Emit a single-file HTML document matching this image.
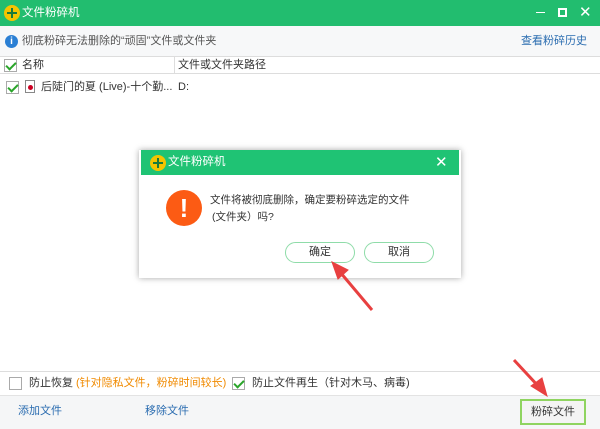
<!DOCTYPE html><html><head><meta charset="utf-8"><style>
*{margin:0;padding:0;box-sizing:border-box}
body{width:600px;height:429px;position:relative;overflow:hidden;background:#fff;font-family:"Liberation Sans","Noto Sans CJK SC",sans-serif;font-size:11px;line-height:12px;color:#333}
.a{position:absolute;white-space:nowrap}
.cb{position:absolute;width:13px;height:13px;border:1px solid #aaa;background:#fff}
.ck::after{content:"";position:absolute;left:3px;top:0px;width:4px;height:8px;border:solid #2aa52a;border-width:0 2px 2px 0;transform:rotate(45deg)}
.logo{position:absolute;width:16px;height:16px;border-radius:50%;background:#f5c400}
.logo::before{content:"";position:absolute;left:3px;top:7px;width:10px;height:2px;background:#1c7a3c}
.logo::after{content:"";position:absolute;left:7px;top:3px;width:2px;height:10px;background:#1c7a3c}
</style></head><body>
<div class="a" style="left:0;top:0;width:600px;height:26px;background:#22bd6f"></div>
<div class="logo" style="left:4px;top:5px"></div>
<div class="a" style="left:22px;top:7px;color:#fff;font-size:11.5px;line-height:13px">文件粉碎机</div>
<div class="a" style="left:536px;top:12px;width:9px;height:1px;background:#fff"></div>
<div class="a" style="left:558px;top:8px;width:9px;height:9px;border:2px solid #fff"></div>
<div class="a" style="left:579px;top:5px;color:#fff;font-size:15px;line-height:16px">✕</div>
<div class="a" style="left:0;top:26px;width:600px;height:31px;background:#f7f8f9;border-bottom:1px solid #ddd"></div>
<div class="a" style="left:5px;top:35px;width:13px;height:13px;border-radius:50%;background:#2a7fd4;color:#fff;font-size:10px;text-align:center;line-height:13px;font-weight:bold">i</div>
<div class="a" style="left:22px;top:35px;color:#555">彻底粉碎无法删除的“顽固”文件或文件夹</div>
<div class="a" style="left:521px;top:35px;color:#2a6cb0">查看粉碎历史</div>
<div class="a" style="left:0;top:57px;width:600px;height:17px;border-bottom:1px solid #ddd;background:#fff"></div>
<div class="a" style="left:174px;top:57px;width:1px;height:17px;background:#ddd"></div>
<div class="cb ck" style="left:4px;top:59px"></div>
<div class="a" style="left:22px;top:59px">名称</div>
<div class="a" style="left:178px;top:59px">文件或文件夹路径</div>
<div class="cb ck" style="left:6px;top:81px"></div>
<div class="a" style="left:25px;top:80px;width:10px;height:13px;border:1px solid #888;background:#fff"><div style="position:absolute;left:2px;top:4px;width:5px;height:5px;border-radius:50%;background:#c02"></div></div>
<div class="a" style="left:41px;top:81px">后陡门的夏 (Live)-十个勤...</div>
<div class="a" style="left:178px;top:81px">D:</div>
<div class="a" style="left:0;top:371px;width:600px;height:1px;background:#ddd"></div>
<div class="cb" style="left:9px;top:377px"></div>
<div class="a" style="left:29px;top:377px">防止恢复</div>
<div class="a" style="left:76px;top:377px;color:#f08a00">(针对隐私文件，粉碎时间较长)</div>
<div class="cb ck" style="left:232px;top:377px"></div>
<div class="a" style="left:252px;top:377px">防止文件再生（针对木马、病毒)</div>
<div class="a" style="left:0;top:395px;width:600px;height:34px;background:#f5f6f7;border-top:1px solid #e3e3e3"></div>
<div class="a" style="left:18px;top:405px;color:#2a6cb0">添加文件</div>
<div class="a" style="left:145px;top:405px;color:#2a6cb0">移除文件</div>
<div class="a" style="left:520px;top:399px;width:66px;height:26px;border:2px solid #8fd460;background:#f4f4f4;text-align:center;line-height:22px">粉碎文件</div>
<div class="a" style="left:139px;top:150px;width:322px;height:128px;background:#fff;box-shadow:0 0 6px rgba(0,0,0,.35)"></div>
<div class="a" style="left:141px;top:150px;width:318px;height:25px;background:#1fc374"></div>
<div class="logo" style="left:150px;top:155px"></div>
<div class="a" style="left:168px;top:156px;color:#fff;font-size:11.5px;line-height:13px">文件粉碎机</div>
<div class="a" style="left:435px;top:155px;color:#fff;font-size:15px;line-height:16px">✕</div>
<div class="a" style="left:166px;top:190px;width:36px;height:36px;border-radius:50%;background:#fc5b14;color:#fff;font-size:26px;font-weight:bold;text-align:center;line-height:36px">!</div>
<div class="a" style="left:210px;top:194px;font-size:10.5px">文件将被彻底删除，确定要粉碎选定的文件</div>
<div class="a" style="left:212px;top:211px;font-size:10.5px">(文件夹）吗?</div>
<div class="a" style="left:285px;top:242px;width:70px;height:21px;border:1px solid #8fdca9;border-radius:11px;text-align:center;line-height:19px">确定</div>
<div class="a" style="left:364px;top:242px;width:70px;height:21px;border:1px solid #8fdca9;border-radius:11px;text-align:center;line-height:19px">取消</div>
<svg class="a" style="left:0;top:0" width="600" height="429"><g fill="#e84040" stroke="#e84040">
<line x1="372" y1="310" x2="340" y2="272" stroke-width="3"/><polygon points="332,262 348,270 338,279"/>
<line x1="514" y1="360" x2="540" y2="388" stroke-width="3"/><polygon points="547,396 531,386 542,378"/></g></svg>
</body></html>
